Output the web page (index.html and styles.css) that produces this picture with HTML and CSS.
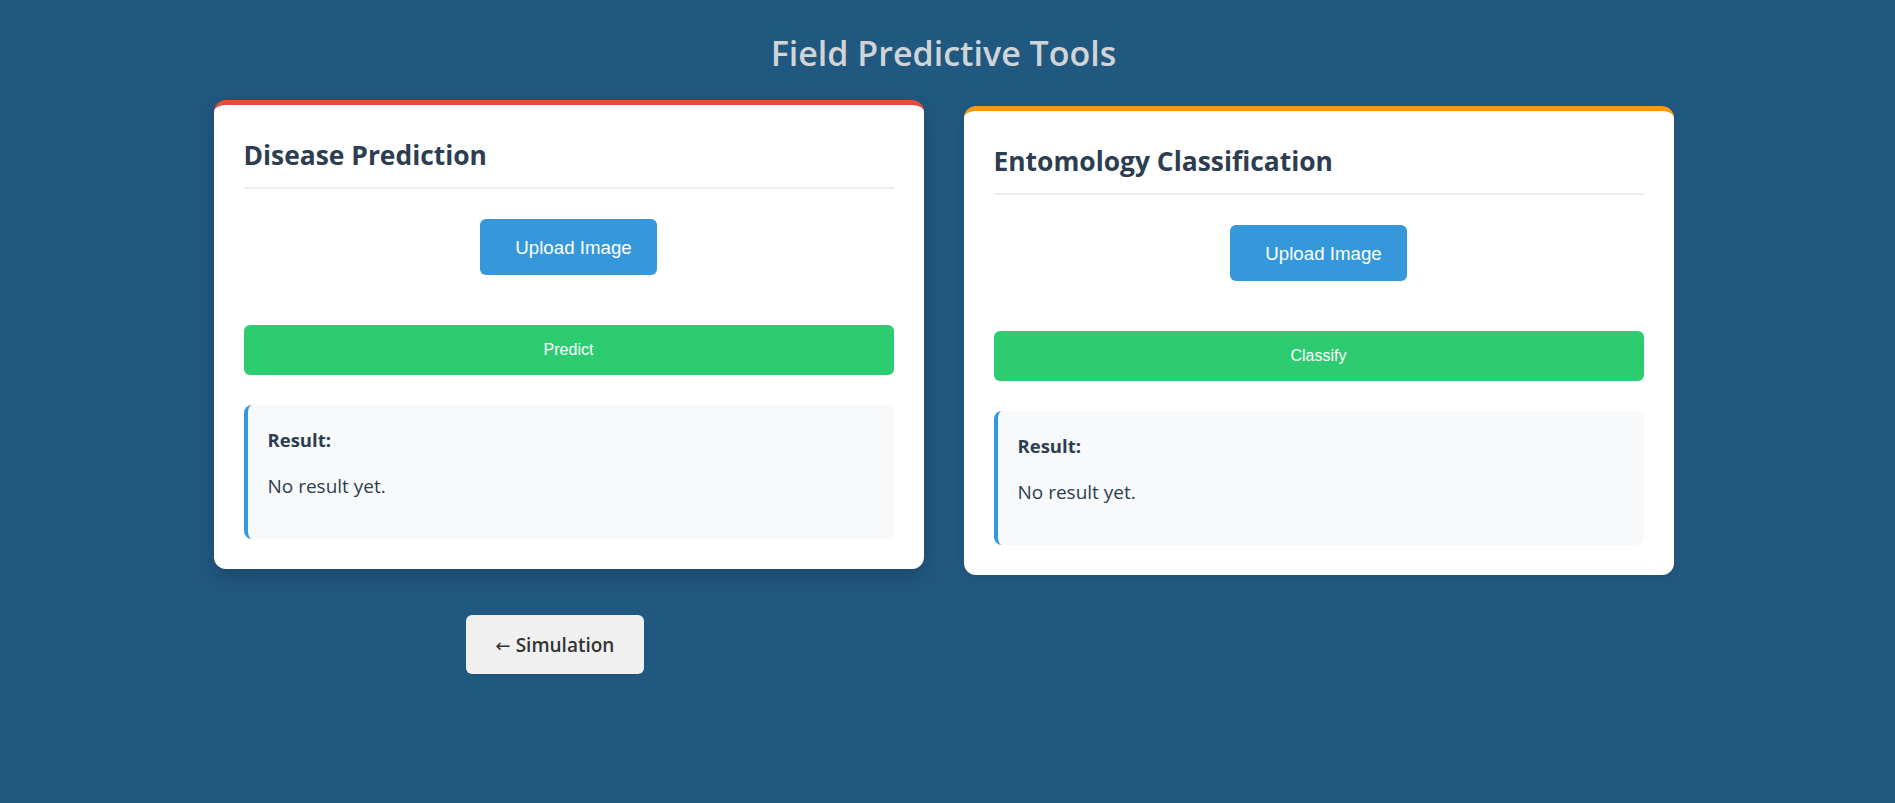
FILE: index.html
```html
<!DOCTYPE html>
<html lang="en">
<head>
<meta charset="utf-8">
<title>Field Predictive Tools</title>
<link rel="stylesheet" href="styles.css">
</head>
<body>
<main class="page">
  <h1 class="page-title">Field Predictive Tools</h1>
  <div class="tools">
    <section class="card card-disease is-hovered">
      <h2 class="card-title">Disease Prediction</h2>
      <div class="upload-row">
        <label class="upload-btn">Upload Image</label>
      </div>
      <button class="action-btn">Predict</button>
      <div class="result">
        <h3 class="result-title">Result:</h3>
        <p class="result-text">No result yet.</p>
      </div>
    </section>
    <section class="card card-ento">
      <h2 class="card-title">Entomology Classification</h2>
      <div class="upload-row">
        <label class="upload-btn">Upload Image</label>
      </div>
      <button class="action-btn">Classify</button>
      <div class="result">
        <h3 class="result-title">Result:</h3>
        <p class="result-text">No result yet.</p>
      </div>
    </section>
    <div class="nav-cell">
      <a class="back-btn" href="#"><span class="back-arrow">←</span> Simulation</a>
    </div>
  </div>
</main>
</body>
</html>
```
FILE: styles.css
```css
* { box-sizing: border-box; }

html, body {
  margin: 0;
  padding: 0;
}

body {
  background: #215880;
  font-family: "Open Sans", "Noto Sans", sans-serif;
  color: #2c3e50;
  min-height: 803px;
  padding-right: 8px;
}

.page {
  padding-top: 30px;
}

.page-title {
  margin: 0;
  text-align: center;
  font-size: 34px;
  font-weight: 600;
  line-height: normal;
  color: #d1d4d7;
}

.tools {
  width: 1460px;
  margin: 30px auto 0;
  display: grid;
  grid-template-columns: 1fr 1fr;
  gap: 40px;
  align-items: start;
}

.card {
  background: #ffffff;
  border-radius: 12px;
  border-top: 5px solid #e74c3c;
  padding: 30px;
  box-shadow: 0 3px 10px rgba(0, 0, 0, 0.08);
}

.card-disease { border-top-color: #e74c3c; }
.card-ento { border-top-color: #f39c12; }

.card.is-hovered {
  transform: translateY(-6px);
  box-shadow: 0 8px 20px rgba(0, 0, 0, 0.18);
}

.card-title {
  margin: 0 0 30px;
  font-size: 26.4px;
  font-weight: 700;
  line-height: 40px;
  padding-bottom: 12px;
  border-bottom: 2px solid #eeeeee;
  color: #2c3e50;
}

.upload-row {
  text-align: center;
  margin-bottom: 50px;
}

.upload-btn {
  display: inline-block;
  background: #3498db;
  color: #ffffff;
  border-radius: 6px;
  font-family: "Liberation Sans", Arial, sans-serif;
  font-size: 18.7px;
  line-height: 22px;
  padding: 18px 25px 16px 35px;
  cursor: pointer;
}

.action-btn {
  display: block;
  width: 100%;
  border: none;
  border-radius: 6px;
  background: #2ecc71;
  color: #ffffff;
  font-family: "Liberation Sans", Arial, sans-serif;
  font-size: 16px;
  line-height: 18px;
  padding: 16px;
  cursor: pointer;
}

.result {
  margin-top: 30px;
  background: #f8f9fa;
  border-left: 4px solid #3498db;
  border-radius: 8px;
  padding: 22px 20px 20px;
}

.result-title {
  margin: 0 0 20px;
  font-size: 18.5px;
  font-weight: 700;
  line-height: 26px;
  color: #2c3e50;
}

.result-text {
  margin: 0 0 20px;
  font-size: 19px;
  line-height: 26px;
  color: #2c3e50;
}

.nav-cell {
  text-align: center;
  padding-right: 27px;
}

.back-btn {
  display: inline-block;
  background: #f0f0f0;
  color: #333333;
  text-decoration: none;
  border-radius: 6px;
  font-size: 19px;
  font-weight: 600;
  line-height: 26px;
  padding: 17px 30px 15px;
  box-shadow: 0 1px 1px rgba(0, 0, 0, 0.08);
}

.back-arrow {
  font-family: "DejaVu Sans", sans-serif;
  font-weight: 400;
  font-size: 18px;
}
```
